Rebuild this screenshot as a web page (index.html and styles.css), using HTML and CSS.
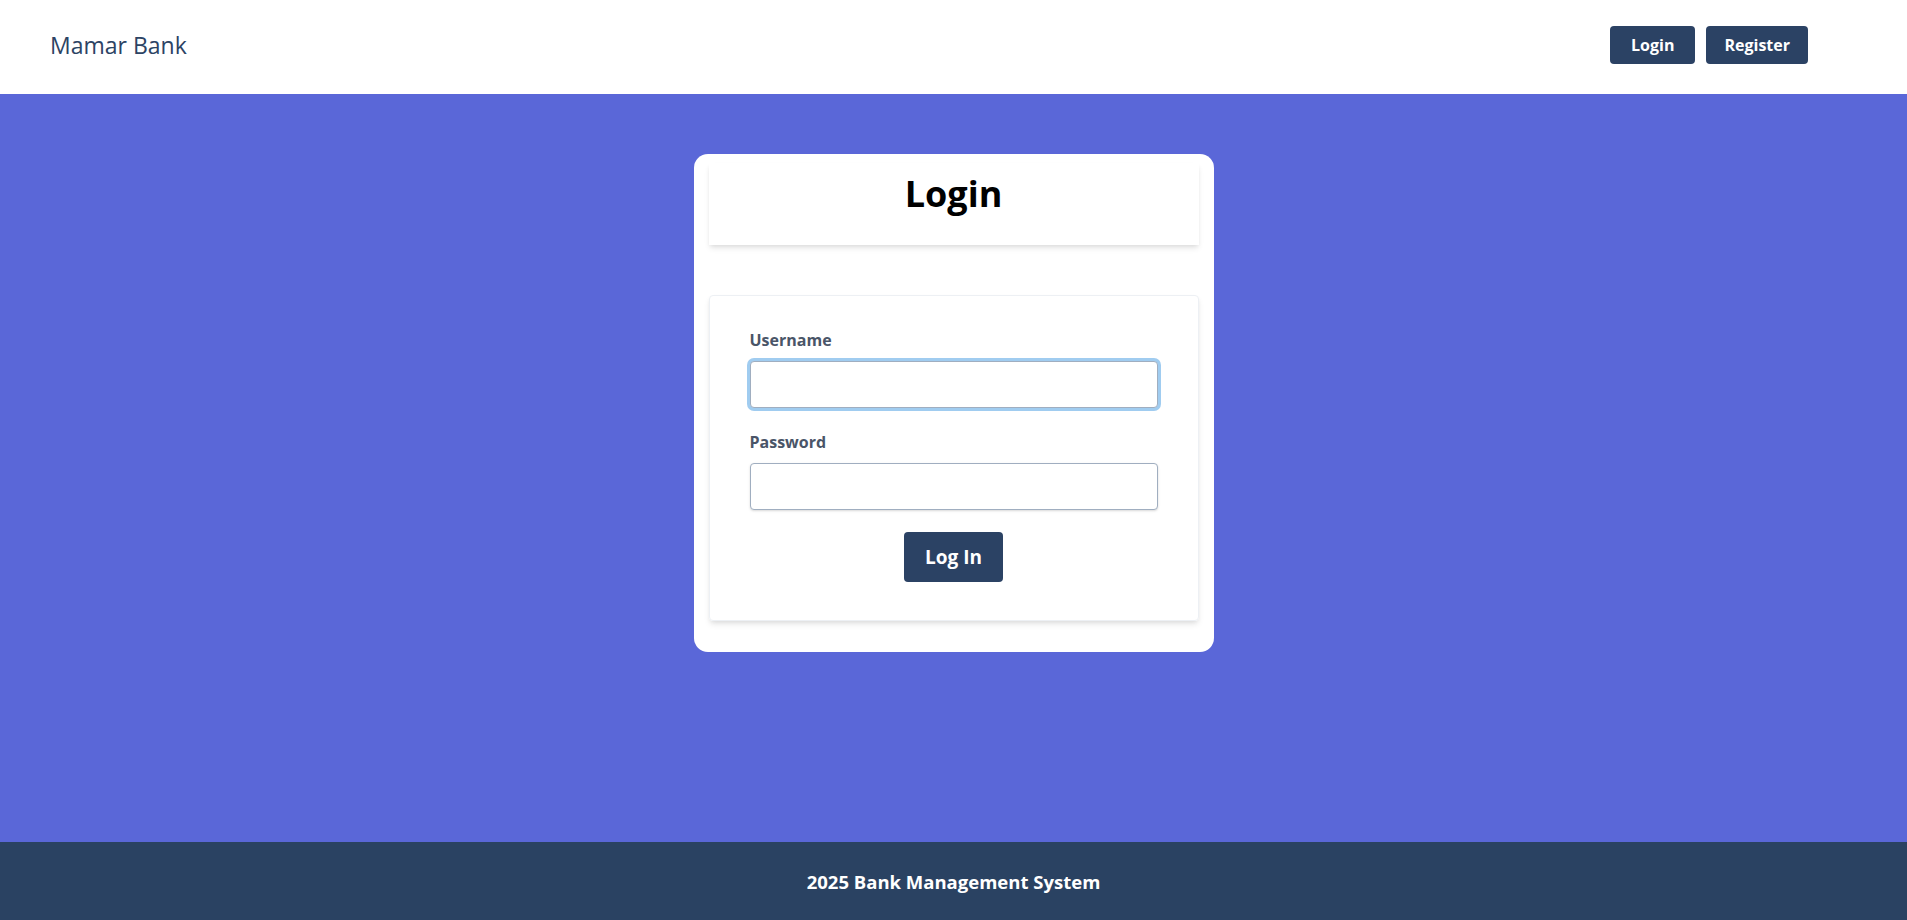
FILE: index.html
```html
<!DOCTYPE html>
<html lang="en">
<head>
<meta charset="utf-8">
<title>Mamar Bank - Login</title>
<link rel="stylesheet" href="styles.css">
</head>
<body>
<header class="topbar">
  <a class="brand" href="#">Mamar Bank</a>
  <nav class="nav">
    <a class="btn nav-btn" href="#">Login</a>
    <a class="btn nav-btn nav-btn-wide" href="#">Register</a>
  </nav>
</header>
<main class="main">
  <section class="card">
    <div class="card-head">
      <h1 class="title">Login</h1>
    </div>
    <form class="form">
      <label class="label" for="username">Username</label>
      <input class="input focused" id="username" type="text" autofocus>
      <label class="label" for="password">Password</label>
      <input class="input" id="password" type="password">
      <div class="actions">
        <button class="btn submit" type="button">Log In</button>
      </div>
    </form>
  </section>
</main>
<footer class="footer">
  <p class="footer-text">2025 Bank Management System</p>
</footer>
</body>
</html>
```
FILE: styles.css
```css
* { box-sizing: border-box; }
html, body { margin: 0; padding: 0; }
body {
  font-family: "Segoe UI", "Open Sans", "Noto Sans", sans-serif;
  min-height: 920px;
  height: 920px;
  display: flex;
  flex-direction: column;
  background: #5a67d8;
}
.topbar {
  height: 94px;
  background: #ffffff;
  display: flex;
  align-items: center;
  justify-content: space-between;
  padding: 0 99px 0 50px;
  flex-shrink: 0;
}
.brand {
  color: #2c4364;
  text-decoration: none;
  font-size: 23px;
  line-height: 1;
  margin-top: -4px;
}
.nav { display: flex; gap: 11px; margin-top: -4px; }
.btn {
  background: #2b4264;
  color: #ffffff;
  border: none;
  border-radius: 4px;
  font-family: inherit;
  font-weight: 700;
  text-decoration: none;
  display: inline-flex;
  align-items: center;
  justify-content: center;
}
.nav-btn {
  height: 38px;
  padding: 0 21px;
  font-size: 16px;
}
.nav-btn-wide { padding: 0 18px; }
.main {
  flex: 1;
  display: flex;
  flex-direction: column;
  align-items: center;
  padding-top: 60px;
}
.card {
  width: 520px;
  background: #ffffff;
  border-radius: 14px;
  padding: 9px 15px 31px;
}
.card-head {
  height: 82px;
  background: #ffffff;
  box-shadow: 0 4px 6px -1px rgba(0,0,0,0.1), 0 2px 4px -1px rgba(0,0,0,0.06);
  display: flex;
  justify-content: center;
  padding-top: 9px;
}
.title {
  margin: 0;
  font-size: 36px;
  line-height: 44px;
  font-weight: 700;
  color: #000000;
}
.form {
  margin-top: 50px;
  border: 1px solid #edf0f4;
  border-radius: 4px;
  box-shadow: 0 4px 6px -1px rgba(0,0,0,0.1), 0 2px 4px -1px rgba(0,0,0,0.06);
  padding: 32px 40px 38px;
  display: flex;
  flex-direction: column;
}
.label {
  display: block;
  font-size: 16px;
  line-height: 24px;
  font-weight: 700;
  color: #4a5568;
  margin-bottom: 9px;
}
.input {
  width: 100%;
  height: 47px;
  border: 1px solid #a0aec0;
  border-radius: 4px;
  box-shadow: 0 1px 3px 0 rgba(0,0,0,0.1), 0 1px 2px 0 rgba(0,0,0,0.06);
  margin-bottom: 22px;
  padding: 0 14px;
  font-family: inherit;
  font-size: 16px;
  color: #4a5568;
  outline: none;
}
.input.focused {
  box-shadow: 0 0 0 3px rgba(66,153,225,0.5);
}
.actions {
  display: flex;
  justify-content: center;
  margin-top: 0;
}
.submit {
  height: 50px;
  padding: 0 21px;
  font-size: 19px;
  cursor: pointer;
}
.footer {
  height: 78px;
  background: #2a4262;
  display: flex;
  align-items: center;
  justify-content: center;
  flex-shrink: 0;
}
.footer-text {
  margin: 0;
  color: #ffffff;
  font-weight: 700;
  font-size: 18.5px;
  margin-top: 0;
}
```
